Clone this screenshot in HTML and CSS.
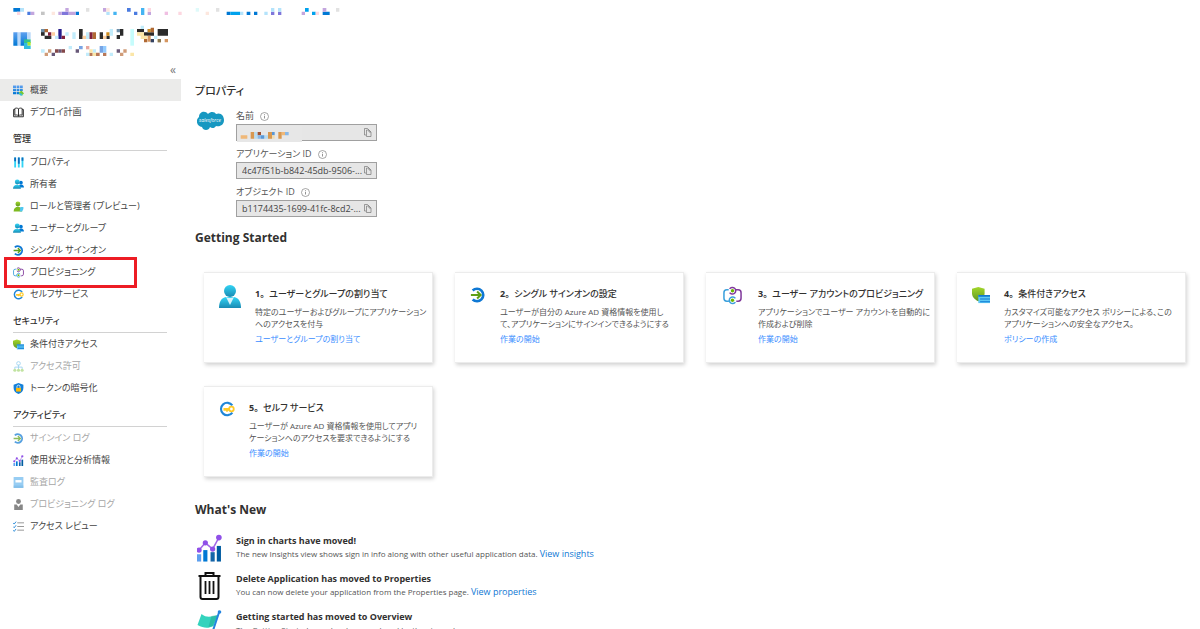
FILE: index.html
```
<!DOCTYPE html>
<html lang="ja">
<head>
    <meta charset="UTF-8">
    <meta name="viewport" content="width=device-width, initial-scale=1.0">
    <title>概要 - エンタープライズ アプリケーション</title>
    <link rel="stylesheet" href="styles.css">
</head>
<body>
    <!-- shared icons -->
    <svg class="sprite" aria-hidden="true">
        <defs>
            <linearGradient id="aqua" x1="0" y1="0" x2="0" y2="1"><stop offset="0" stop-color="#32d4f5"/><stop offset="1" stop-color="#198ab3"/></linearGradient>
            <linearGradient id="blue" x1="0" y1="0" x2="0" y2="1"><stop offset="0" stop-color="#5ea0ef"/><stop offset="1" stop-color="#0078d4"/></linearGradient>
            <linearGradient id="green" x1="0" y1="0" x2="0" y2="1"><stop offset="0" stop-color="#a4d82a"/><stop offset="1" stop-color="#5e9624"/></linearGradient>
        </defs>
        <symbol id="i-grid" viewBox="0 0 18 18"><path fill="url(#blue)" d="M0 1h5v4H0zM6 1h4v4H6zM11 1h5v4h-5zM0 6h5v4H0zM6 6h4v4H6zM11 6h5v4h-5zM0 11h5v4H0zM6 11h4v4H6z"/><path fill="#76c832" d="M10 12l4-3 4 5-4 3-4-2z"/><path fill="#32bedd" d="M9 13l5 1 2 3h-4z"/></symbol>
        <symbol id="i-book" viewBox="0 0 18 18"><path fill="none" stroke="#222" stroke-width="1.5" d="M9 3v12M9 3c-2-1.500-4-1.500-6-.5v11c2-.8 4-.8 6 1 2-1.800 4-1.800 6-1V2.500c-2-1-4-1-6 .5zM3 4H1v12h16V4h-2"/></symbol>
        <symbol id="i-bars" viewBox="0 0 18 18"><path fill="#32d4f5" d="M2 1h3v16H2zM8 1h3v16H8zM14 1h3v16h-3z"/><path fill="#0f6cbd" d="M2 1h3v6H2zM8 1h3v10H8zM14 1h3v5h-3z"/></symbol>
        <symbol id="i-users" viewBox="0 0 18 18"><circle cx="13" cy="6" r="3" fill="#0078d4"/><path fill="#0078d4" d="M9 14c0-7 9-6 9 0z"/><circle cx="7" cy="5" r="4" fill="url(#aqua)"/><path fill="url(#aqua)" d="M0 16c0-9 13-9 13 0z"/></symbol>
        <symbol id="i-role" viewBox="0 0 18 18"><circle cx="8" cy="5" r="4" fill="url(#green)"/><path fill="#7fba20" d="M1 17c0-10 14-10 14 0z"/><path fill="#50c8f0" d="M12 10h5v3l-2 4h-4z"/></symbol>
        <symbol id="i-user" viewBox="0 0 22 24"><circle cx="11" cy="6" r="6" fill="url(#aqua)"/><path fill="url(#aqua)" d="M0 23c0-6 2-10 7-11h8c5 1 7 5 7 11z"/><path fill="#d8f3fb" d="M7 12l4 8 4-8q-4 2-8 0z"/></symbol>
        <symbol id="i-sso" viewBox="0 0 18 18"><path fill="none" stroke="#0f78d4" stroke-width="3" d="M3 4a7 7 0 1 1 0 10"/><path fill="none" stroke="#5ea018" stroke-width="2.200" d="M1 9h11M8 5l4 4-4 4"/></symbol>
        <symbol id="i-prov" viewBox="0 0 20 20"><path fill="none" stroke="#813a9c" stroke-width="1.600" d="M7 3a3.500 3.500 0 1 1 0 4M13 4h3q3 0 3 3v6q0 3-3 3h-2"/><path fill="none" stroke="#3ca0dc" stroke-width="1.600" d="M6 4H4Q1 4 1 7v6q0 3 3 3h2M13 13a3.500 3.500 0 1 0 0 4"/><circle cx="10" cy="5" r="1.800" fill="#6bb700"/><circle cx="10" cy="15" r="1.800" fill="#6bb700"/></symbol>
        <symbol id="i-key" viewBox="0 0 18 18"><path fill="none" stroke="#1f86d8" stroke-width="2.400" d="M15 5a7 7 0 1 0 0 8"/><path fill="#ffca28" d="M5 8h7v3h-2v1H8v-1H5z"/><circle cx="14" cy="9" r="2.600" fill="none" stroke="#ffca28" stroke-width="2"/></symbol>
        <symbol id="i-cond" viewBox="0 0 20 20"><path fill="url(#green)" d="M7 1l7 2v5c0 4-3 7-7 9-4-2-7-5-7-9V3z"/><path fill="#5ec8f5" d="M7 10h13v9H7z"/><path fill="#0f78d4" d="M7 10h13v2H7zM9 14h11v1H9zM9 17h11v1H9z"/></symbol>
        <symbol id="i-tree" viewBox="0 0 18 18"><path fill="none" stroke="#7cc4ee" stroke-width="1.500" d="M9 6v7M3 14V10h12v4"/><circle cx="9" cy="4" r="3" fill="none" stroke="#7cc4ee" stroke-width="1.500"/><circle cx="3" cy="15" r="2.500" fill="#a8d87a"/><circle cx="9" cy="15" r="2.500" fill="#a8d87a"/><circle cx="15" cy="15" r="2.500" fill="#a8d87a"/></symbol>
        <symbol id="i-shield" viewBox="0 0 18 18"><path fill="#1480d8" d="M9 0l8 3v5c0 5-3 8-8 10-5-2-8-5-8-10V3z"/><path fill="#ffb900" d="M5 8h8v6H5z"/><path fill="none" stroke="#d8ecfa" stroke-width="1.500" d="M6.500 8V6a2.500 2.500 0 0 1 5 0v2"/></symbol>
        <symbol id="i-chart" viewBox="0 0 24 26"><path fill="#5ea0ef" d="M0 19h4v7H0z"/><path fill="#0078d4" d="M6 15h4v11H6z"/><path fill="#1565a8" d="M13 17h4v9h-4z"/><path fill="#005ba1" d="M19 11h4v15h-4z"/><path fill="none" stroke="#a367e8" stroke-width="1.500" d="M2 15l6-7 7 6 6-11"/><g fill="#9050e8"><circle cx="2" cy="15" r="2.500"/><circle cx="8" cy="8" r="2.500"/><circle cx="15" cy="14" r="2.500"/><circle cx="21" cy="3" r="2.700"/></g></symbol>
        <symbol id="i-log" viewBox="0 0 18 18"><rect x="1" y="0" width="16" height="18" rx="1" fill="#6cb8ee"/><path fill="#fff" d="M4 5h10v4H4z"/><path fill="#3c96d8" d="M1 14h16v4H1z" opacity=".5"/></symbol>
        <symbol id="i-person" viewBox="0 0 18 18"><circle cx="9" cy="4" r="4" fill="#555"/><path fill="#555" d="M2 9h4l3 4 3-4h4v9H2z"/></symbol>
        <symbol id="i-check" viewBox="0 0 18 18"><path fill="none" stroke="#888" stroke-width="1.400" d="M7 3h11M7 9h11M7 15h11"/><path fill="none" stroke="#1f86d8" stroke-width="1.500" d="M0 3l2 2 3-4M0 9l2 2 3-4M0 15l2 2 3-4"/></symbol>
        <symbol id="i-trash" viewBox="0 0 24 28"><path fill="none" stroke="#111" stroke-width="2" d="M1 4h22M8 4V1h8v3M3 4v21q0 2 2 2h14q2 0 2-2V4"/><path stroke="#111" stroke-width="1.800" d="M8 9v13M12 9v13M16 9v13"/></symbol>
        <symbol id="i-flag" viewBox="0 0 24 28"><path fill="#34d3bd" d="M4 4c5 4 9 3 17 1l-5 11c-6 3-10 2-16-1z"/><path fill="#22a894" d="M14 6l6-1-5 11-4 1z" opacity=".5"/><path stroke="#2484e0" stroke-width="2" d="M22 1L13 28"/><circle cx="22" cy="2" r="1.800" fill="#2484e0"/></symbol>
        <symbol id="i-info" viewBox="0 0 18 18"><circle cx="9" cy="9" r="8" fill="none" stroke="#777" stroke-width="1.300"/><path stroke="#777" stroke-width="1.600" d="M9 8v5M9 4.500v2"/></symbol>
        <symbol id="i-copy" viewBox="0 0 18 18"><path fill="none" stroke="#777" stroke-width="1.400" d="M6 14H3V1h6l3 3"/><path fill="#e6e6e6" stroke="#777" stroke-width="1.400" d="M7 4h5l4 4v9H7zM12 4v4h4"/></symbol>
    </svg>

    <header class="top">
        <!-- masked breadcrumb, app icon and app name -->
        <svg class="mask" viewBox="0 0 1050 180" role="img" aria-label="アプリ名">
            <path fill="#0078d4" d="M40 24h21v11H40zM227 35h10v10h-10zM680 35h11v10h-11zM740 35h11v10h-11zM762 35h10v10h-10zM968 35h21v10h-21z"/>
            <path fill="#00a2ed" d="M691 35h29v10h-29zM915 24h11v11h-11zM936 35h11v10h-11z"/>
            <path fill="#44b4f2" d="M340 35h10v10h-10zM423 24h10v21h-10z"/>
            <path fill="#4a7be0" d="M82 35h10v10H82zM381 24h11v11h-11zM402 35h10v10h-10z"/>
            <path fill="#7f76da" d="M185 35h21v10h-21zM813 35h10v10h-10zM834 35h10v10h-10z"/>
            <path fill="#c3a6de" d="M92 35h11v10H92zM175 35h10v10h-10zM196 24h10v11h-10zM206 35h21v10h-21zM309 24h10v11h-10zM443 35h10v10h-10zM905 35h10v10h-10zM968 24h11v11h-11z"/>
            <path fill="#b4e3fb" d="M61 24h11v11H61zM319 35h10v10h-10zM720 35h10v10h-10zM793 35h10v10h-10zM813 24h10v11h-10zM834 24h10v11h-10z"/>
            <path fill="#fdd7e0" d="M51 35h10v10H51zM443 24h10v11h-10zM535 35h10v10h-10zM947 35h10v10h-10z"/>
            <path fill="#f0bfe2" d="M494 35h10v10h-10z"/>
            <path fill="#fde7de" d="M155 35h10v10h-10zM319 24h10v11h-10zM617 35h10v10h-10z"/>
            <path fill="#e2e2e2" d="M258 24h10v11h-10zM648 24h10v11h-10zM1008 24h10v11h-10z"/>
            <path fill="#c4c4c4" d="M123 35h11v10h-11z"/>
            <path fill="#dffafa" d="M587 24h10v11h-10z"/>

            <path fill="url(#blue)" d="M40 97h13v40H40zM61 97h21v40H61z"/>
            <path fill="#b9d8fa" d="M53 97h8v40h-8zM82 97h10v21H82z"/>
            <path fill="#30c090" d="M72 118h20v11H72z"/><path fill="#a8e82c" d="M82 126h10v11H82z"/><path fill="#30bedd" d="M72 129h10v18H72zM82 137h10v10H82z"/>

            <path fill="#2b2b2b" d="M123 87h11v20h-11zM134 107h20v10h-20zM237 87h11v30h-11zM299 97h10v20h-10zM319 107h10v10h-10zM360 87h10v20h-10zM350 105h10v12h-10zM411 87h21v10h-21zM432 97h30v10h-30zM473 87h31v20h-31z"/>
            <path fill="#281e8c" d="M175 87h10v30h-10z"/>
            <path fill="#80203c" d="M144 97h10v10h-10zM185 107h10v10h-10zM268 97h10v20h-10z"/>
            <path fill="#6e8ea8" d="M123 87h11v10h-11zM350 87h10v10h-10zM443 87h9v10h-9z"/>
            <path fill="#b06a34" d="M134 87h10v10h-10zM278 97h10v20h-10zM452 83h10v14h-10zM432 117h10v10h-10z"/>
            <path fill="#d08a1c" d="M443 87h9v10h-9zM319 97h10v10h-10z"/>
            <path fill="#fdd0a0" d="M155 97h10v10h-10zM309 107h10v10h-10zM248 107h10v10h-10zM473 117h10v10h-10z"/>
            <path fill="#c2ecfb" d="M165 107h10v10h-10zM196 97h10v10h-10zM217 97h10v20h-10zM258 97h10v20h-10zM329 87h10v20h-10zM422 77h10v10h-10zM462 107h10v10h-10z"/>
            <path fill="#c6fcfc" d="M391 87h11v50h-11z"/>
            <path fill="#fbe6a8" d="M411 97h21v10h-21zM422 107h20v10h-20z"/>
            <path fill="#d59660" d="M443 107h9v18h-9zM494 117h10v10h-10z"/>
            <path fill="#344260" d="M452 117h10v10h-10z"/><path fill="#8c7a50" d="M473 117h10v10h-10z"/>

            <path fill="#d09c78" d="M144 148h10v10h-10zM134 158h10v10h-10zM360 158h10v10h-10zM370 148h10v10h-10z"/>
            <path fill="#685878" d="M155 158h10v10h-10zM175 148h10v10h-10zM227 148h10v10h-10zM350 148h10v10h-10z"/>
            <path fill="#84484a" d="M165 148h10v10h-10zM185 148h10v10h-10z"/>
            <path fill="#b87858" d="M268 158h10v10h-10zM288 158h11v10h-11zM309 158h10v10h-10z"/>
            <path fill="#78a4e4" d="M237 138h11v10h-11zM299 138h10v20h-10z"/>
            <path fill="#94ccff" d="M309 138h10v20h-10z"/>
            <path fill="#c2ecfb" d="M123 148h11v10h-11zM206 138h10v10h-10zM258 158h10v10h-10zM278 148h10v10h-10zM329 158h10v10h-10z"/>
            <path fill="#e8a8a0" d="M258 138h10v10h-10z"/>
            <path fill="#fbe6a8" d="M268 148h10v10h-10zM278 158h10v10h-10zM391 158h11v10h-11z"/>
        </svg>
    </header>

    <div class="layout">
        <nav class="sidebar">
            <div class="collapse"><button type="button" aria-label="折りたたむ">«</button></div>
            <ul>
                <li class="active"><a href="#"><svg><use href="#i-grid"/></svg>概要</a></li>
                <li><a href="#"><svg><use href="#i-book"/></svg>デプロイ計画</a></li>
            </ul>
            <h3>管理</h3>
            <ul>
                <li><a href="#"><svg><use href="#i-bars"/></svg>プロパティ</a></li>
                <li><a href="#"><svg><use href="#i-users"/></svg>所有者</a></li>
                <li><a href="#"><svg><use href="#i-role"/></svg>ロールと管理者 (プレビュー)</a></li>
                <li><a href="#"><svg><use href="#i-users"/></svg>ユーザーとグループ</a></li>
                <li><a href="#"><svg><use href="#i-sso"/></svg>シングル サインオン</a></li>
                <li class="marked"><a href="#"><svg><use href="#i-prov"/></svg>プロビジョニング</a></li>
                <li><a href="#"><svg><use href="#i-key"/></svg>セルフサービス</a></li>
            </ul>
            <h3>セキュリティ</h3>
            <ul>
                <li><a href="#"><svg><use href="#i-cond"/></svg>条件付きアクセス</a></li>
                <li class="disabled"><a href="#"><svg><use href="#i-tree"/></svg>アクセス許可</a></li>
                <li><a href="#"><svg><use href="#i-shield"/></svg>トークンの暗号化</a></li>
            </ul>
            <h3>アクティビティ</h3>
            <ul>
                <li class="disabled"><a href="#"><svg><use href="#i-sso"/></svg>サインイン ログ</a></li>
                <li><a href="#"><svg><use href="#i-chart"/></svg>使用状況と分析情報</a></li>
                <li class="disabled"><a href="#"><svg><use href="#i-log"/></svg>監査ログ</a></li>
                <li class="disabled"><a href="#"><svg><use href="#i-person"/></svg>プロビジョニング ログ</a></li>
                <li><a href="#"><svg><use href="#i-check"/></svg>アクセス レビュー</a></li>
            </ul>
        </nav>

        <main>
            <h2 class="props-title">プロパティ</h2>
            <section class="props">
                <svg class="cloud" viewBox="0 0 27 20" role="img" aria-label="salesforce">
                    <path fill="#1798c1" d="M2 6C2 1 8-1 11 3c3-3 7-2 8 0 5-2 8 2 8 6 0 5-4 7-8 6-1 2-4 3-6 1-1 4-7 4-8 0C0 16-2 9 2 6z"/>
                    <text x="13" y="11" text-anchor="middle">salesforce</text>
                </svg>
                <div class="fields">
                    <div class="field">
                        <label for="name">名前 <svg><use href="#i-info"/></svg></label>
                        <div class="copybox">
                            <input id="name" type="text" readonly>
                            <button type="button" aria-label="コピー"><svg><use href="#i-copy"/></svg></button>
                            <svg class="name-mask" viewBox="0 0 195 48">
                                <path fill="#e7e7e7" d="M0 0h195v48H0z"/>
                                <path fill="#f0b878" d="M11 28h20v10H11zM134 18h10v10h-10z"/>
                                <path fill="#d89850" d="M41 18h11v20H41zM93 18h12v20H93zM124 18h10v20h-10z"/>
                                <path fill="#b8dcf0" d="M52 18h10v20H52zM83 28h10v10H83z"/>
                                <path fill="#a05030" d="M62 18h10v10H62z"/>
                                <path fill="#5898d8" d="M72 28h10v10H72zM105 18h8v10h-8z"/>
                                <path fill="#88b8e8" d="M62 28h10v10H62zM144 18h11v10h-11z"/>
                                <path fill="#f0dcb0" d="M105 28h8v10h-8z"/>
                            </svg>
                        </div>
                    </div>
                    <div class="field">
                        <label for="appid">アプリケーション ID <svg><use href="#i-info"/></svg></label>
                        <div class="copybox">
                            <input id="appid" type="text" value="4c47f51b-b842-45db-9506-..." readonly>
                            <button type="button" aria-label="コピー"><svg><use href="#i-copy"/></svg></button>
                        </div>
                    </div>
                    <div class="field">
                        <label for="objid">オブジェクト ID <svg><use href="#i-info"/></svg></label>
                        <div class="copybox">
                            <input id="objid" type="text" value="b1174435-1699-41fc-8cd2-..." readonly>
                            <button type="button" aria-label="コピー"><svg><use href="#i-copy"/></svg></button>
                        </div>
                    </div>
                </div>
            </section>

            <h2 class="start-title">Getting Started</h2>
            <section class="cards">
                <article class="card">
                    <svg class="ic-user"><use href="#i-user"/></svg>
                    <div>
                        <h4><span class="num">1。</span>ユーザーとグループの割り当て</h4>
                        <p>特定のユーザーおよびグループにアプリケーション<br>へのアクセスを付与</p>
                        <a href="#">ユーザーとグループの割り当て</a>
                    </div>
                </article>
                <article class="card">
                    <svg class="ic-small"><use href="#i-sso"/></svg>
                    <div>
                        <h4><span class="num">2。</span>シングル サインオンの設定</h4>
                        <p>ユーザーが自分の Azure AD 資格情報を使用し<br>て、アプリケーションにサインインできるようにする</p>
                        <a href="#">作業の開始</a>
                    </div>
                </article>
                <article class="card">
                    <svg class="ic-prov"><use href="#i-prov"/></svg>
                    <div>
                        <h4><span class="num">3。</span>ユーザー アカウントのプロビジョニング</h4>
                        <p>アプリケーションでユーザー アカウントを自動的に<br>作成および削除</p>
                        <a href="#">作業の開始</a>
                    </div>
                </article>
                <article class="card">
                    <svg class="ic-cond"><use href="#i-cond"/></svg>
                    <div>
                        <h4><span class="num">4。</span>条件付きアクセス</h4>
                        <p>カスタマイズ可能なアクセス ポリシーによる、この<br>アプリケーションへの安全なアクセス。</p>
                        <a href="#">ポリシーの作成</a>
                    </div>
                </article>
                <article class="card">
                    <svg class="ic-small"><use href="#i-key"/></svg>
                    <div>
                        <h4><span class="num">5。</span>セルフ サービス</h4>
                        <p>ユーザーが Azure AD 資格情報を使用してアプリ<br>ケーションへのアクセスを要求できるようにする</p>
                        <a href="#">作業の開始</a>
                    </div>
                </article>
            </section>

            <h2 class="news-title">What's New</h2>
            <section class="news">
                <article>
                    <svg><use href="#i-chart"/></svg>
                    <div>
                        <h4>Sign in charts have moved!</h4>
                        <p>The new Insights view shows sign in info along with other useful application data. <a href="#">View insights</a></p>
                    </div>
                </article>
                <article>
                    <svg><use href="#i-trash"/></svg>
                    <div>
                        <h4>Delete Application has moved to Properties</h4>
                        <p>You can now delete your application from the Properties page. <a href="#">View properties</a></p>
                    </div>
                </article>
                <article>
                    <svg><use href="#i-flag"/></svg>
                    <div>
                        <h4>Getting started has moved to Overview</h4>
                        <p>The Getting Started page has been replaced by the steps above</p>
                    </div>
                </article>
            </section>
        </main>
    </div>
</body>
</html>
```
FILE: styles.css
```
*,
*::after {
    box-sizing: border-box;
}

html {
    height: 100%;
    overflow: hidden;
}

body {
    margin: 0;
    height: 100%;
    overflow: hidden;
    background: #fff;
    color: #323130;
    font-family: "Open Sans", "Noto Sans CJK JP", sans-serif;
    font-size: 9px;
    line-height: 12px;
    font-feature-settings: "palt";
}

h2, h3, h4, p, ul {
    margin: 0;
    padding: 0;
}

a {
    color: #0f78d4;
    text-decoration: none;
}

button {
    border: none;
    background: none;
    padding: 0;
    font: inherit;
    color: inherit;
    cursor: pointer;
}

svg {
    flex: none;
}

.sprite {
    position: absolute;
    width: 0;
    height: 0;
}

.top {
    height: 60px;
}

.mask {
    display: block;
    width: 350px;
    height: 60px;
}

.layout {
    display: flex;
}

/* sidebar */
.sidebar {
    flex: none;
    width: 181px;
}

.collapse {
    height: 19px;
    padding: 4px 5px 0 0;
    text-align: right;
}

.collapse button {
    display: inline-block;
    font-size: 12px;
    color: #777;
}

.sidebar ul {
    list-style: none;
}

.sidebar li {
    position: relative;
}

.sidebar li a {
    display: flex;
    align-items: center;
    gap: 6px;
    height: 22px;
    padding-left: 13px;
    color: #444;
    white-space: nowrap;
}

.sidebar li svg {
    width: 11px;
    height: 11px;
}

.sidebar .active {
    background: #ebebea;
}

.sidebar .disabled a {
    color: #a6a6a6;
}

.sidebar .disabled svg {
    opacity: 0.7;
}

.marked::after {
    content: "";
    position: absolute;
    top: -4px;
    bottom: -5px;
    left: 4px;
    width: 133px;
    border: 3px solid #ed1c24;
    pointer-events: none;
}

.sidebar h3 {
    height: 28px;
    margin: 0 14px 0 13px;
    padding-top: 10px;
    border-bottom: 1px solid #d2d2d2;
    font-size: 9px;
    font-weight: 500;
}

/* main column */
main {
    flex: 1;
    min-width: 0;
    padding: 23px 14px 0 14px;
}

h2 {
    font-size: 12px;
    line-height: 16px;
    font-weight: 700;
}

.props-title {
    font-size: 11px;
    font-weight: 500;
}

.props {
    display: flex;
    gap: 12px;
    margin-top: 9px;
    padding-left: 2px;
}

.cloud {
    width: 27px;
    height: 20px;
    margin-top: 3px;
}

.cloud text {
    fill: #fff;
    font-size: 5px;
    font-style: italic;
}

.fields {
    width: 141px;
}

.field {
    margin-bottom: 5px;
}

.field label {
    display: flex;
    align-items: center;
    gap: 6px;
    height: 16px;
    color: #555;
}

.field label svg {
    width: 9px;
    height: 9px;
}

.copybox {
    position: relative;
    display: flex;
    align-items: center;
    height: 17px;
    padding-right: 4px;
    border: 1px solid #a0a0a0;
    background: #e6e6e6;
}

.copybox input {
    flex: 1;
    min-width: 0;
    padding: 0 0 0 5px;
    border: none;
    background: none;
    font: inherit;
    color: #444;
    outline: none;
}

.copybox button,
.copybox button svg {
    display: block;
    width: 9px;
    height: 9px;
}

.copybox .name-mask {
    position: absolute;
    top: 1px;
    left: 0;
    width: 65px;
    height: 16px;
}

.start-title {
    margin-top: 8px;
}

/* cards */
.cards {
    display: grid;
    grid-template-columns: repeat(4, 1fr);
    gap: 23px 22px;
    margin-top: 26px;
    padding-left: 9px;
}

.card {
    display: flex;
    gap: 14px;
    min-width: 0;
    min-height: 91px;
    padding: 12px 0 0 15px;
    border: 1px solid #ececec;
    border-width: 1px 1px 1px 0;
    box-shadow: 1px 2px 4px rgba(0, 0, 0, 0.18);
    white-space: nowrap;
}

.card h4 {
    margin: 3px 0 6px;
    font-size: 9px;
    font-weight: 500;
}

.num {
    font-weight: 700;
    font-feature-settings: normal;
}

.card p {
    font-size: 8px;
    color: #555;
}

.card a {
    display: block;
    margin-top: 3px;
    font-size: 8px;
    color: #3b8eff;
}

.ic-user {
    width: 22px;
    height: 24px;
}

.ic-small {
    width: 16px;
    height: 16px;
    margin-top: 2px;
}

.ic-prov {
    width: 23px;
    height: 19px;
    margin-top: 1px;
}

.ic-cond {
    width: 18px;
    height: 18px;
    margin-top: 1px;
}

/* news */
.news-title {
    margin-top: 25px;
}

.news {
    padding-left: 2px;
    margin-top: 16px;
}

.news article {
    display: flex;
    gap: 14px;
    height: 38px;
    white-space: nowrap;
}

.news svg {
    width: 25px;
    height: 28px;
}

.news h4 {
    font-size: 9px;
    font-weight: 700;
    line-height: 14px;
}

.news p {
    font-size: 8px;
    color: #555;
}

.news a {
    font-size: 9px;
}
```
